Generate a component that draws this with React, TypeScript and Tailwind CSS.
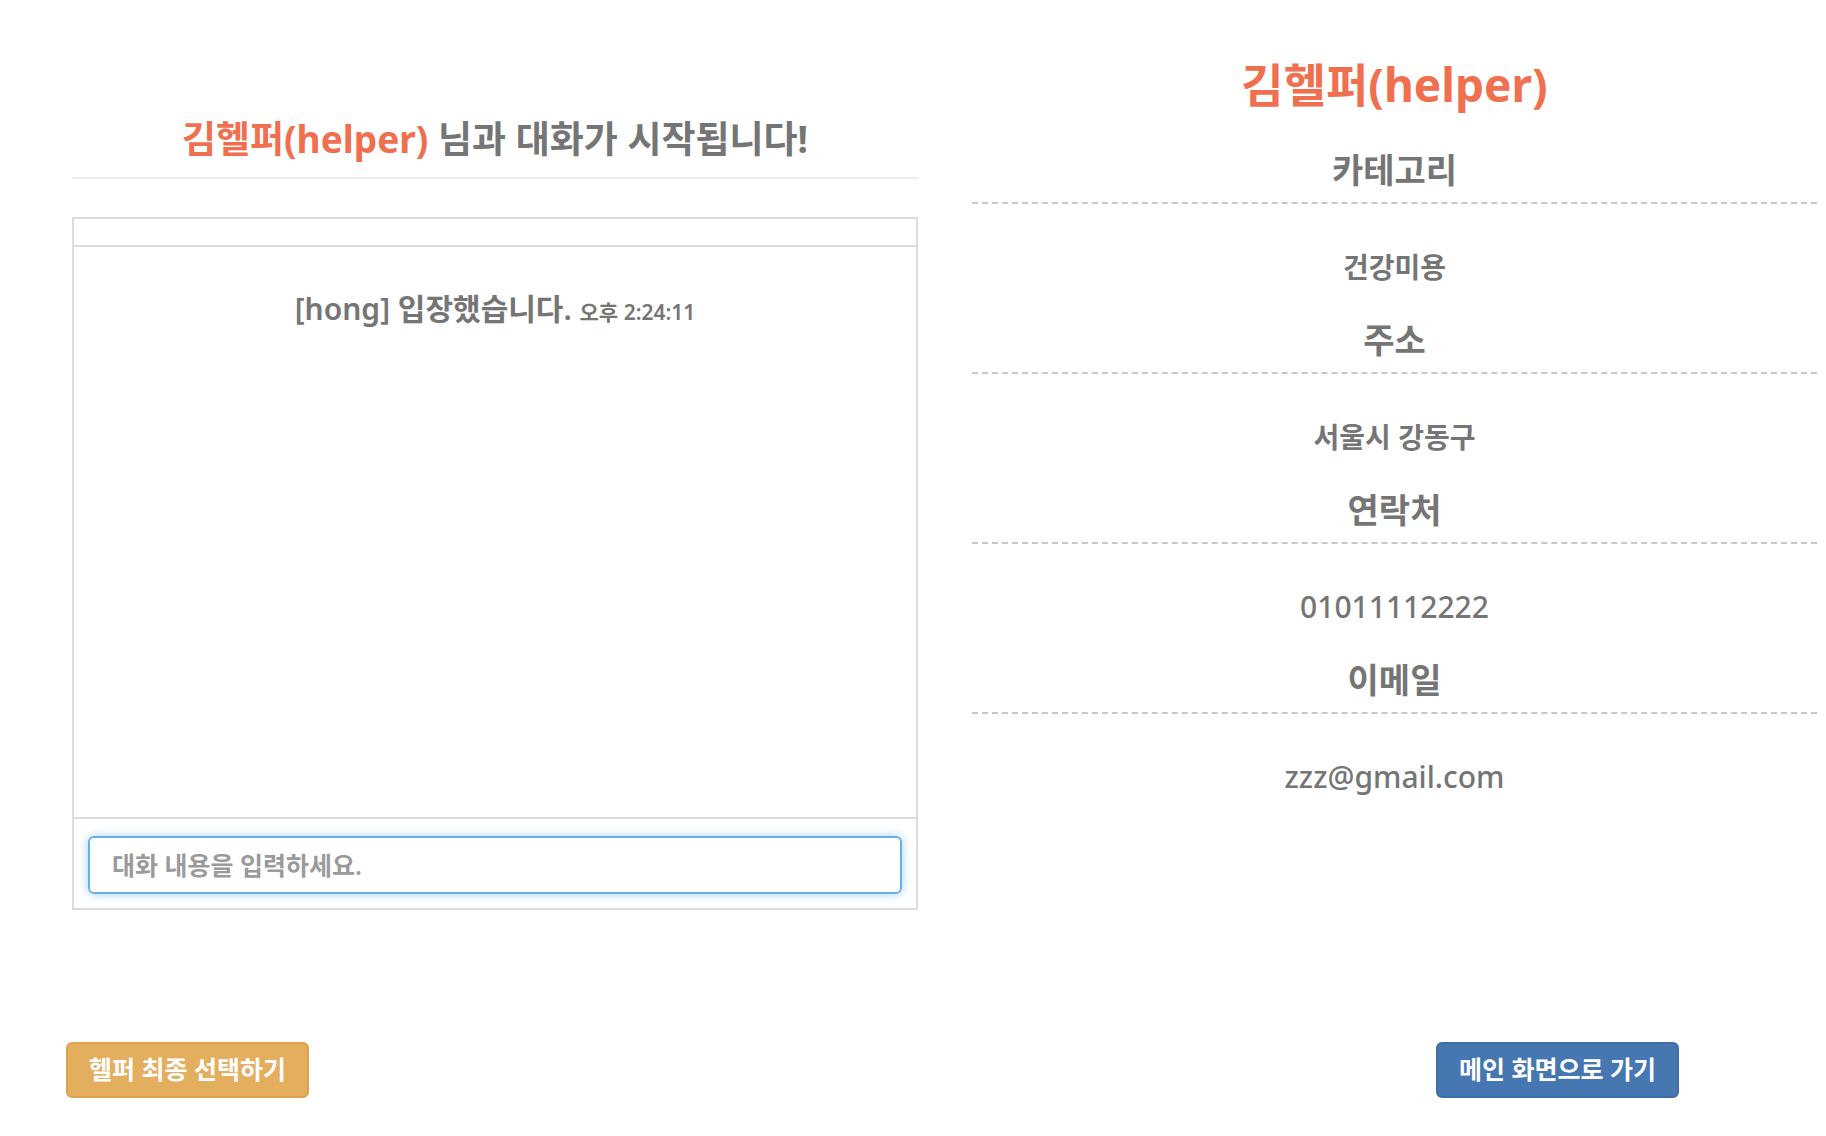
const font = { fontFamily: '"Noto Sans", "Noto Sans CJK KR", sans-serif' }

const profile = [
  { label: '카테고리', value: '건강미용', latin: false },
  { label: '주소', value: '서울시 강동구', latin: false },
  { label: '연락처', value: '01011112222', latin: true },
  { label: '이메일', value: 'zzz@gmail.com', latin: true },
]

function ChatPanel() {
  return (
    <section className="flex w-[846px] flex-col">
      <h2 className="mt-[117px] border-b-2 border-[#eeeeee] pb-[16px] text-center text-[37px] font-bold leading-[44px] text-[#757575]">
        <span className="text-[#ef6f4f]">김헬퍼(helper)</span> 님과 대화가 시작됩니다!
      </h2>
      <div className="mt-[38px] flex flex-col border-2 border-[#dcdcdc]">
        <div className="h-[28px] border-b-2 border-[#dcdcdc]" />
        <div className="h-[572px] border-b-2 border-[#dcdcdc] pt-[44px] text-center">
          <p className="text-[30px] font-semibold leading-[36px] text-[#757575]">
            [hong] 입장했습니다.{' '}
            <span className="text-[21px]">오후 2:24:11</span>
          </p>
        </div>
        <div className="px-[14px] pb-[14px] pt-[17px]">
          <input
            className="h-[58px] w-full rounded-[6px] border-2 border-[#66afe9] px-[22px] text-[25px] font-semibold text-[#555] shadow-[0_0_10px_rgba(102,175,233,0.6)] outline-none placeholder:text-[#9a9a9a]"
            style={font}
            placeholder="대화 내용을 입력하세요."
          />
        </div>
      </div>
    </section>
  )
}

function HelperInfo() {
  return (
    <aside className="ml-[54px] flex w-[845px] flex-col text-center text-[#757575]">
      <h1 className="mt-[56px] text-[46px] font-bold leading-[56px] text-[#ef6f4f]">
        김헬퍼(helper)
      </h1>
      {profile.map((item, i) => (
        <div key={item.label} className="flex flex-col">
          <h3
            className={`${i === 0 ? 'mt-[38px]' : 'mt-[36px]'} border-b-2 border-dashed border-[#c8c8c8] pb-[12px] text-[34px] font-bold leading-[40px]`}
          >
            {item.label}
          </h3>
          <p
            className={`mt-[46px] leading-[34px] ${item.latin ? 'text-[30px] font-medium' : 'text-[28px] font-semibold'}`}
          >
            {item.value}
          </p>
        </div>
      ))}
    </aside>
  )
}

export default function App() {
  return (
    <div className="min-h-[1136px] w-[1826px] bg-white" style={font}>
      <div className="flex items-start pl-[72px]">
        <ChatPanel />
        <HelperInfo />
      </div>
      <div className="mt-[132px] flex justify-between pl-[66px] pr-[147px]">
        <button className="h-[56px] w-[243px] rounded-[6px] border-2 border-[#dda24c] bg-[#e4ae5f] text-[25px] font-bold text-white">
          헬퍼 최종 선택하기
        </button>
        <button className="h-[56px] w-[243px] rounded-[6px] border-2 border-[#3f6ea6] bg-[#4677b0] text-[25px] font-bold text-white">
          메인 화면으로 가기
        </button>
      </div>
    </div>
  )
}
